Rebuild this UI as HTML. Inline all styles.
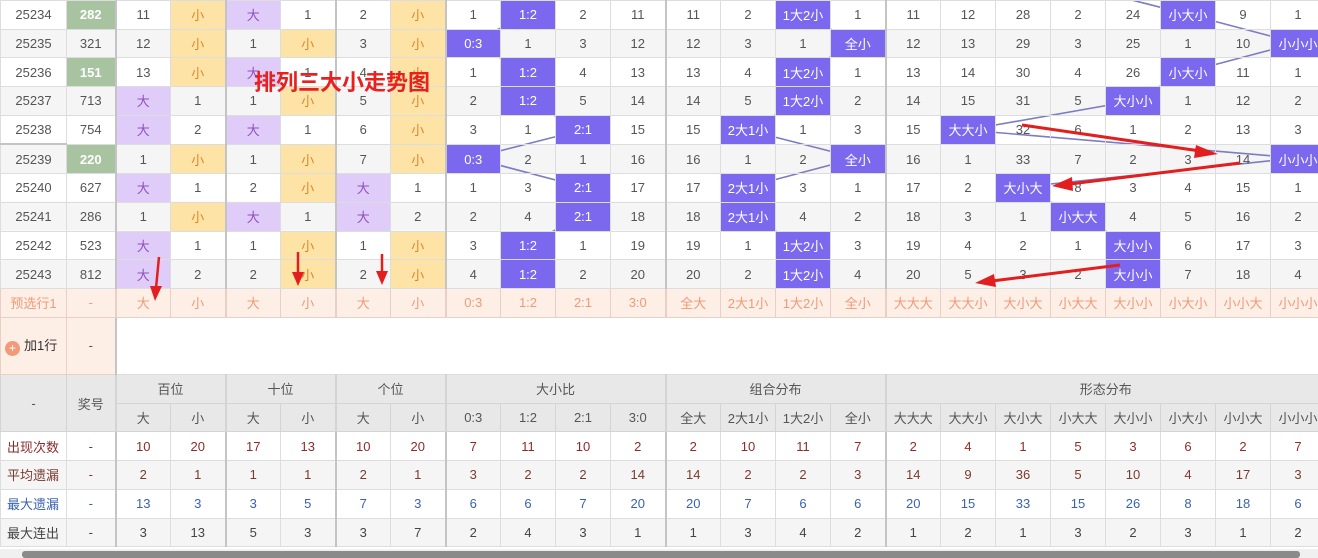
<!DOCTYPE html>
<html><head><meta charset="utf-8">
<style>
body{margin:0;width:1318px;height:558px;overflow:hidden;background:#fff;position:relative;font-family:"Liberation Sans","Noto Sans CJK SC",sans-serif;}
.bg{position:absolute;left:0;top:0;width:1318px;height:288px;background:repeating-linear-gradient(to bottom,#fff 0,#fff 28.8px,#f5f5f5 28.8px,#f5f5f5 57.6px);}
.wrap{position:absolute;left:0;top:0;width:1318px;height:549px;overflow:hidden;z-index:2}
table{border-collapse:collapse;table-layout:fixed;width:1325px;font-size:13px;color:#555;}
td{border:1px solid #ddd;text-align:center;height:27.7px;padding:0;white-space:nowrap;overflow:hidden;}
.g{border-left:2px solid #c4c4c4;}
tr.a td{background:#fff}
tr.b td{background:#f5f5f5}
tr.d td{background:transparent}
td.gr{background:#a8c3a0 !important;color:#fff;font-weight:bold}
td.p{background:#e0ccf8 !important;color:#9050c0}
td.y{background:#fde4a6 !important;color:#e0852a}
td.bl{background:#7b68ee !important;color:#fff}
tr.pre td{background:#fdeee6;color:#f09a78;border-color:#e8d0c8}
tr.h td{background:#e8e8e8;color:#555;border-color:#d4d4d4}
.r1 td{color:#8b2c2c}
.r2 td{color:#7a3b30}
.r3 td{color:#3a62b0}
.r4 td{color:#444}
.lab{text-align:left;padding-left:6px}
.sb{position:absolute;left:0;top:549px;width:1318px;height:9px;background:#f0f0f0}
.th{position:absolute;left:22px;top:551px;width:1278px;height:7px;background:#8a8a8a;border-radius:3px}
svg{position:absolute;left:0;top:0}
</style></head><body>
<div class="bg"></div>
<svg width="1318" height="300" style="z-index:1">
<g stroke="#7c7cc4" stroke-width="1.6" fill="none">
<polyline points="527,14 472,43 527,72 527,101 582,130 472,158 582,187 582,216 527,245 527,274"/>
<polyline points="802,14 857,43 802,72 802,101 747,130 857,158 747,187 747,216 802,245 802,274"/>
<polyline points="1100,-8 1187,14 1297,43 1187,72 1132,101 967,130 1297,158 1022,187 1077,216 1132,245 1132,274"/>
</g>
</svg>
<div class="wrap">
<table>
<colgroup><col style="width:66px"><col style="width:49px"><col span="22" style="width:55px"></colgroup>
<tr class="d"><td>25234</td><td class="gr">282</td><td class="g">11</td><td class="y">小</td><td class="p g">大</td><td>1</td><td class="g">2</td><td class="y">小</td><td class="g">1</td><td class="bl">1:2</td><td>2</td><td>11</td><td class="g">11</td><td>2</td><td class="bl">1大2小</td><td>1</td><td class="g">11</td><td>12</td><td>28</td><td>2</td><td>24</td><td class="bl">小大小</td><td>9</td><td>1</td></tr>
<tr class="d"><td>25235</td><td>321</td><td class="g">12</td><td class="y">小</td><td class="g">1</td><td class="y">小</td><td class="g">3</td><td class="y">小</td><td class="bl g">0:3</td><td>1</td><td>3</td><td>12</td><td class="g">12</td><td>3</td><td>1</td><td class="bl">全小</td><td class="g">12</td><td>13</td><td>29</td><td>3</td><td>25</td><td>1</td><td>10</td><td class="bl">小小小</td></tr>
<tr class="d"><td>25236</td><td class="gr">151</td><td class="g">13</td><td class="y">小</td><td class="p g">大</td><td>1</td><td class="g">4</td><td class="y">小</td><td class="g">1</td><td class="bl">1:2</td><td>4</td><td>13</td><td class="g">13</td><td>4</td><td class="bl">1大2小</td><td>1</td><td class="g">13</td><td>14</td><td>30</td><td>4</td><td>26</td><td class="bl">小大小</td><td>11</td><td>1</td></tr>
<tr class="d"><td>25237</td><td>713</td><td class="p g">大</td><td>1</td><td class="g">1</td><td class="y">小</td><td class="g">5</td><td class="y">小</td><td class="g">2</td><td class="bl">1:2</td><td>5</td><td>14</td><td class="g">14</td><td>5</td><td class="bl">1大2小</td><td>2</td><td class="g">14</td><td>15</td><td>31</td><td>5</td><td class="bl">大小小</td><td>1</td><td>12</td><td>2</td></tr>
<tr class="d"><td>25238</td><td>754</td><td class="p g">大</td><td>2</td><td class="p g">大</td><td>1</td><td class="g">6</td><td class="y">小</td><td class="g">3</td><td>1</td><td class="bl">2:1</td><td>15</td><td class="g">15</td><td class="bl">2大1小</td><td>1</td><td>3</td><td class="g">15</td><td class="bl">大大小</td><td>32</td><td>6</td><td>1</td><td>2</td><td>13</td><td>3</td></tr>
<tr class="d"><td style="border-top:2px solid #c4c4c4">25239</td><td class="gr">220</td><td class="g">1</td><td class="y">小</td><td class="g">1</td><td class="y">小</td><td class="g">7</td><td class="y">小</td><td class="bl g">0:3</td><td>2</td><td>1</td><td>16</td><td class="g">16</td><td>1</td><td>2</td><td class="bl">全小</td><td class="g">16</td><td>1</td><td>33</td><td>7</td><td>2</td><td>3</td><td>14</td><td class="bl">小小小</td></tr>
<tr class="d"><td>25240</td><td>627</td><td class="p g">大</td><td>1</td><td class="g">2</td><td class="y">小</td><td class="p g">大</td><td>1</td><td class="g">1</td><td>3</td><td class="bl">2:1</td><td>17</td><td class="g">17</td><td class="bl">2大1小</td><td>3</td><td>1</td><td class="g">17</td><td>2</td><td class="bl">大小大</td><td>8</td><td>3</td><td>4</td><td>15</td><td>1</td></tr>
<tr class="d"><td>25241</td><td>286</td><td class="g">1</td><td class="y">小</td><td class="p g">大</td><td>1</td><td class="p g">大</td><td>2</td><td class="g">2</td><td>4</td><td class="bl">2:1</td><td>18</td><td class="g">18</td><td class="bl">2大1小</td><td>4</td><td>2</td><td class="g">18</td><td>3</td><td>1</td><td class="bl">小大大</td><td>4</td><td>5</td><td>16</td><td>2</td></tr>
<tr class="d"><td>25242</td><td>523</td><td class="p g">大</td><td>1</td><td class="g">1</td><td class="y">小</td><td class="g">1</td><td class="y">小</td><td class="g">3</td><td class="bl">1:2</td><td>1</td><td>19</td><td class="g">19</td><td>1</td><td class="bl">1大2小</td><td>3</td><td class="g">19</td><td>4</td><td>2</td><td>1</td><td class="bl">大小小</td><td>6</td><td>17</td><td>3</td></tr>
<tr class="d"><td>25243</td><td>812</td><td class="p g">大</td><td>2</td><td class="g">2</td><td class="y">小</td><td class="g">2</td><td class="y">小</td><td class="g">4</td><td class="bl">1:2</td><td>2</td><td>20</td><td class="g">20</td><td>2</td><td class="bl">1大2小</td><td>4</td><td class="g">20</td><td>5</td><td>3</td><td>2</td><td class="bl">大小小</td><td>7</td><td>18</td><td>4</td></tr>
<tr class="pre"><td>预选行1</td><td>-</td><td class="g">大</td><td>小</td><td class="g">大</td><td>小</td><td class="g">大</td><td>小</td><td class="g">0:3</td><td>1:2</td><td>2:1</td><td>3:0</td><td class="g">全大</td><td>2大1小</td><td>1大2小</td><td>全小</td><td class="g">大大大</td><td>大大小</td><td>大小大</td><td>小大大</td><td>大小小</td><td>小大小</td><td>小小大</td><td>小小小</td></tr>
<tr><td style="height:56.5px;background:#fdeee6;color:#333;border-color:#e8d0c8;text-align:left;padding-left:4px"><span style="display:inline-block;width:15px;height:15px;border-radius:50%;background:#f29a78;color:#fff;font-size:12px;line-height:15px;text-align:center;vertical-align:-2px;margin-right:4px">+</span>加1行</td><td style="background:#fdeee6;border-color:#e8d0c8">-</td><td colspan="22" class="g" style="background:#fff"></td></tr>
<tr class="h"><td rowspan="2">-</td><td rowspan="2">奖号</td><td colspan="2" class="g">百位</td><td colspan="2" class="g">十位</td><td colspan="2" class="g">个位</td><td colspan="4" class="g">大小比</td><td colspan="4" class="g">组合分布</td><td colspan="8" class="g">形态分布</td></tr>
<tr class="h"><td class="g">大</td><td>小</td><td class="g">大</td><td>小</td><td class="g">大</td><td>小</td><td class="g">0:3</td><td>1:2</td><td>2:1</td><td>3:0</td><td class="g">全大</td><td>2大1小</td><td>1大2小</td><td>全小</td><td class="g">大大大</td><td>大大小</td><td>大小大</td><td>小大大</td><td>大小小</td><td>小大小</td><td>小小大</td><td>小小小</td></tr>
<tr class="a r1"><td class="lab">出现次数</td><td>-</td><td class="g">10</td><td>20</td><td class="g">17</td><td>13</td><td class="g">10</td><td>20</td><td class="g">7</td><td>11</td><td>10</td><td>2</td><td class="g">2</td><td>10</td><td>11</td><td>7</td><td class="g">2</td><td>4</td><td>1</td><td>5</td><td>3</td><td>6</td><td>2</td><td>7</td></tr>
<tr class="b r2"><td class="lab">平均遗漏</td><td>-</td><td class="g">2</td><td>1</td><td class="g">1</td><td>1</td><td class="g">2</td><td>1</td><td class="g">3</td><td>2</td><td>2</td><td>14</td><td class="g">14</td><td>2</td><td>2</td><td>3</td><td class="g">14</td><td>9</td><td>36</td><td>5</td><td>10</td><td>4</td><td>17</td><td>3</td></tr>
<tr class="a r3"><td class="lab">最大遗漏</td><td>-</td><td class="g">13</td><td>3</td><td class="g">3</td><td>5</td><td class="g">7</td><td>3</td><td class="g">6</td><td>6</td><td>7</td><td>20</td><td class="g">20</td><td>7</td><td>6</td><td>6</td><td class="g">20</td><td>15</td><td>33</td><td>15</td><td>26</td><td>8</td><td>18</td><td>6</td></tr>
<tr class="b r4"><td class="lab">最大连出</td><td>-</td><td class="g">3</td><td>13</td><td class="g">5</td><td>3</td><td class="g">3</td><td>7</td><td class="g">2</td><td>4</td><td>3</td><td>1</td><td class="g">1</td><td>3</td><td>4</td><td>2</td><td class="g">1</td><td>2</td><td>1</td><td>3</td><td>2</td><td>3</td><td>1</td><td>2</td></tr>
</table>
</div>
<svg width="1318" height="558" style="z-index:3">
<g fill="#e31e1e" stroke="#e31e1e">
<line x1="1022" y1="125" x2="1200" y2="151" stroke-width="3"/><polygon points="1218,154 1196,145 1194,158" stroke="none"/>
<line x1="1240" y1="163" x2="1070" y2="184" stroke-width="3"/><polygon points="1052,186 1072,177 1073,191" stroke="none"/>
<line x1="1120" y1="265" x2="992" y2="281" stroke-width="3"/><polygon points="975,283 994,274 996,287" stroke="none"/>
<line x1="159" y1="257" x2="156" y2="288" stroke-width="2.5"/><polygon points="155,301 150,286 162,286" stroke="none"/>
<line x1="298" y1="252" x2="298" y2="274" stroke-width="2.5"/><polygon points="298,286 292,272 304,272" stroke="none"/>
<line x1="382" y1="254" x2="382" y2="274" stroke-width="2.5"/><polygon points="382,285 376,271 388,271" stroke="none"/>
</g>
<text x="254" y="90" font-family="Liberation Sans, Noto Sans CJK SC, sans-serif" font-size="22" font-weight="bold" fill="#e8201f">排列三大小走势图</text>
</svg>
<div class="sb"></div><div class="th"></div>
</body></html>
